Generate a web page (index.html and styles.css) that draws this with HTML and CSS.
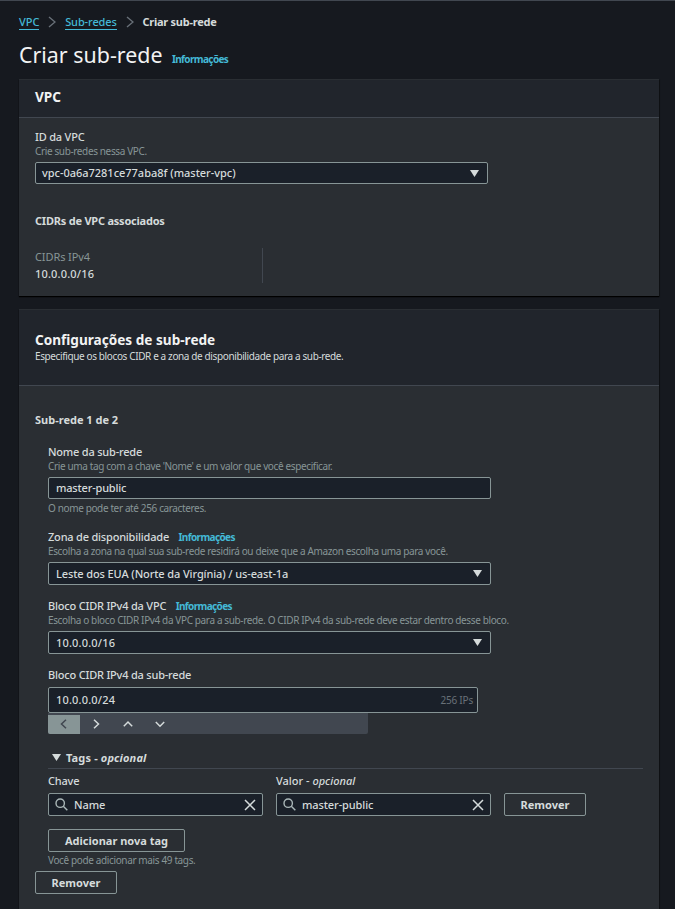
FILE: index.html
```html
<!DOCTYPE html>
<html lang="pt-BR">
<head>
<meta charset="utf-8">
<title>Criar sub-rede</title>
<link rel="stylesheet" href="styles.css">
</head>
<body>
<nav class="crumbs">
  <a>VPC</a>
  <svg class="sep" viewBox="0 0 8 12"><path d="M1 1l6 5-6 5"/></svg>
  <a class="crumb-wide">Sub-redes</a>
  <svg class="sep" viewBox="0 0 8 12"><path d="M1 1l6 5-6 5"/></svg>
  <b>Criar sub-rede</b>
</nav>
<header class="page-title"><h1>Criar sub-rede</h1><a class="info">Informações</a></header>

<section class="panel">
  <div class="panel-head"><h2>VPC</h2></div>
  <div class="panel-body vpc">
    <div class="label">ID da VPC</div>
    <div class="hint">Crie sub-redes nessa VPC.</div>
    <div class="field select"><span>vpc-0a6a7281ce77aba8f (master-vpc)</span><svg class="caret" viewBox="0 0 9 7"><path d="M0 0h9L4.5 7z"/></svg></div>
    <h3 class="assoc">CIDRs de VPC associados</h3>
    <div class="kv"><div class="key">CIDRs IPv4</div><div class="ip">10.0.0.0/16</div></div>
  </div>
</section>

<section class="panel subnets">
  <div class="panel-head tall"><h2>Configurações de sub-rede</h2><p>Especifique os blocos CIDR e a zona de disponibilidade para a sub-rede.</p></div>
  <div class="panel-body">
    <h3>Sub-rede 1 de 2</h3>
    <div class="form">
      <div class="label">Nome da sub-rede</div>
      <div class="hint">Crie uma tag com a chave 'Nome' e um valor que você especificar.</div>
      <div class="field name">master-public</div>
      <div class="hint below">O nome pode ter até 256 caracteres.</div>

      <div class="label next"><span>Zona de disponibilidade</span><a class="info">Informações</a></div>
      <div class="hint">Escolha a zona na qual sua sub-rede residirá ou deixe que a Amazon escolha uma para você.</div>
      <div class="field select"><span>Leste dos EUA (Norte da Virgínia) / us-east-1a</span><svg class="caret" viewBox="0 0 9 7"><path d="M0 0h9L4.5 7z"/></svg></div>

      <div class="label next"><span>Bloco CIDR IPv4 da VPC</span><a class="info">Informações</a></div>
      <div class="hint">Escolha o bloco CIDR IPv4 da VPC para a sub-rede. O CIDR IPv4 da sub-rede deve estar dentro desse bloco.</div>
      <div class="field select"><span class="ip">10.0.0.0/16</span><svg class="caret" viewBox="0 0 9 7"><path d="M0 0h9L4.5 7z"/></svg></div>

      <div class="label next">Bloco CIDR IPv4 da sub-rede</div>
      <div class="field cidr"><span class="ip">10.0.0.0/24</span><span class="ips">256 IPs</span></div>
      <div class="stepper">
        <span class="step off"><svg viewBox="0 0 10 10"><path d="M7 .8L2.5 5 7 9.200"/></svg></span>
        <span class="step"><svg viewBox="0 0 10 10"><path d="M3 .8L7.500 5 3 9.200"/></svg></span>
        <span class="step"><svg viewBox="0 0 10 10"><path d="M.8 7.200L5 3l4.200 4.200"/></svg></span>
        <span class="step"><svg viewBox="0 0 10 10"><path d="M.8 3L5 7.200 9.200 3"/></svg></span>
      </div>

      <div class="tags-head"><svg class="caret" viewBox="0 0 9 7"><path d="M0 0h9L4.500 7z"/></svg><b>Tags - <i>opcional</i></b></div>
      <div class="tags">
        <div>
          <div class="label">Chave</div>
          <div class="field search"><svg class="mag" viewBox="0 0 13 13"><circle cx="5.200" cy="5.200" r="4.200"/><path d="M8.300 8.300l4 4"/></svg><span>Name</span><svg class="clear" viewBox="0 0 12 12"><path d="M1 1l10 10M11 1L1 11"/></svg></div>
        </div>
        <div>
          <div class="label optional">Valor - <i>opcional</i></div>
          <div class="field search"><svg class="mag" viewBox="0 0 13 13"><circle cx="5.200" cy="5.200" r="4.200"/><path d="M8.300 8.300l4 4"/></svg><span>master-public</span><svg class="clear" viewBox="0 0 12 12"><path d="M1 1l10 10M11 1L1 11"/></svg></div>
        </div>
        <button>Remover</button>
      </div>
      <button class="add">Adicionar nova tag</button>
      <div class="hint more">Você pode adicionar mais 49 tags.</div>
    </div>
    <button class="remove">Remover</button>
  </div>
</section>
</body>
</html>
```

FILE: styles.css
```css
* { box-sizing: border-box; }
html { background: #16191f; overflow: hidden; }
body {
  margin: 0;
  height: 909px;
  overflow: hidden;
  padding: 13px 16px 0 19px;
  border-top: 1px solid #414750;
  background: #16191f;
  color: #d5dbdb;
  font: 500 11px/16px "Noto Sans", "Open Sans", sans-serif;
}
h1, h2, h3, p { margin: 0; }
svg { display: block; flex: none; fill: none; stroke: currentColor; }

.crumbs { display: flex; height: 16px; align-items: center; }
.crumbs a { height: 16px; line-height: 16px; color: #44b9d6; border-bottom: 1px solid #44b9d6; }
.crumbs .crumb-wide { letter-spacing: -0.1px; }
.crumbs b { font-weight: 700; letter-spacing: -0.250px; }
.sep { width: 8px; height: 12px; margin: 0 8.700px 0 9px; stroke: #687078; stroke-width: 1.4; }
.page-title { display: flex; align-items: baseline; height: 30px; margin: 10px 0 9px; }
h1 { font-size: 21.400px; line-height: 30px; font-weight: 400; color: #f2f3f3; }
.info { margin-left: 9.500px; font-size: 10px; font-weight: 700; color: #44b9d6; letter-spacing: -0.620px; }

.panel {
  width: 640px;
  background: #2a2e33;
  border-top: 1px solid #2a2e33;
  box-shadow: 0 1px 1px #000, 1px 1px 1px rgba(0, 0, 0, .2);
}
.panel-head { height: 38px; padding: 7px 16px 0; background: #21252c; border-bottom: 1px solid #414750; }
h2 { font-size: 13.600px; line-height: 20px; font-weight: 700; color: #f2f3f3; }
.tall { height: 76px; padding-top: 20px; }
.tall p { font-size: 10px; font-weight: 400; line-height: 12px; letter-spacing: -0.380px; }
.panel-body { padding: 11px 16px 13px; }
.subnets { margin-top: 13px; height: 640px; }
.subnets .panel-body { padding-top: 26px; }

.label { height: 16px; white-space: nowrap; letter-spacing: -0.2px; }
.optional { letter-spacing: 0; }
.next { margin-top: 13px; }
.hint { height: 14px; font-size: 10px; font-weight: 400; line-height: 12px; color: #879596; letter-spacing: -0.370px; white-space: nowrap; }
.field {
  display: flex;
  align-items: center;
  justify-content: space-between;
  width: 443px;
  height: 23px;
  margin-top: 3px;
  padding: 0 8px 0 7px;
  background: #1a2029;
  border: 1px solid #879596;
  border-radius: 2px;
  letter-spacing: -0.110px;
}
.caret { width: 9px; height: 7px; fill: #d5dbdb; stroke: none; }
.vpc .field { width: 453px; height: 22px; padding-left: 6px; letter-spacing: -0.020px; }
.field.name { height: 22px; letter-spacing: -0.180px; }
.below { margin-top: 3px; }
h3 { font-size: 11px; line-height: 16px; font-weight: 700; }
.assoc { margin: 29px 0 19px; letter-spacing: -0.220px; }
.kv { width: 228px; height: 35px; padding-top: 1px; border-right: 1px solid #414750; }
.key { font-weight: 400; color: #879596; margin-bottom: 1px; letter-spacing: -0.1px; }
.ip { letter-spacing: .170px; }
.form { padding: 16px 0 0 13px; }
.cidr { width: 430px; height: 26px; margin-top: 4px; padding-right: 4px; }
.ips { font-size: 10px; font-weight: 400; color: #687078; letter-spacing: -0.2px; }
.stepper { display: flex; width: 320px; height: 21px; background: #414750; border-radius: 0 0 2px 2px; }
.step { display: flex; width: 32px; align-items: center; justify-content: center; padding-top: 1px; }
.step svg { width: 10px; height: 10px; stroke-width: 1.500; }
.off { height: 19px; margin-top: 2px; padding: 0 0 1px; background: #879596; color: #414750; border-bottom-left-radius: 2px; }

.tags-head { display: flex; height: 19px; margin-top: 16px; padding-left: 4px; width: 595px; border-bottom: 1px solid #414750; letter-spacing: .150px; }
.tags-head .caret { margin: 4px 5px 0 0; }
.tags { display: flex; gap: 13px; align-items: flex-end; margin-top: 4px; }
.search { width: 215px; margin-top: 4px; padding: 0 6px; }
.search span { flex: 1; padding-left: 6px; letter-spacing: -0.1px; }
.mag { width: 13px; height: 13px; stroke: #aab7b8; stroke-width: 1.400; }
.clear { width: 12px; height: 12px; stroke-width: 1.500; }
button {
  display: block;
  width: 82px;
  height: 23px;
  padding: 0;
  background: transparent;
  border: 1px solid #879596;
  border-radius: 2px;
  color: #d5dbdb;
  font: 700 11px/21px "Noto Sans", "Open Sans", sans-serif;
  letter-spacing: 0;
}
.add { width: 137px; margin-top: 13px; }
.more { margin-top: 1px; line-height: 14px; }
.remove { margin-top: 4px; line-height: 20px; }
```
